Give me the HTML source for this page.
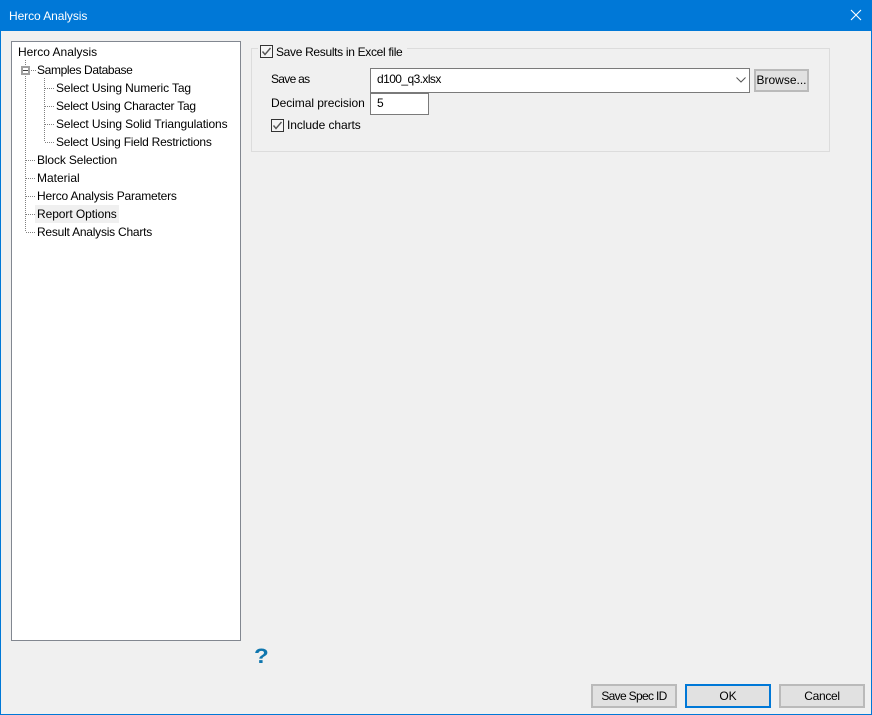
<!DOCTYPE html>
<html><head><meta charset="utf-8"><style>
html,body{margin:0;padding:0;width:872px;height:715px;overflow:hidden}
body{position:relative;background:#f0f0f0;font:12px/16px "Liberation Sans",sans-serif;color:#000}
#win{position:absolute;left:0;top:0;width:870px;height:713px;border:1px solid #0078d7}
.a{position:absolute;white-space:nowrap}
.d{position:absolute;background-image:linear-gradient(#808080 50%,transparent 50%);background-size:1px 2px;width:1px}
.h{position:absolute;background-image:linear-gradient(90deg,#808080 50%,transparent 50%);background-size:2px 1px;height:1px}
.btn{position:absolute;box-sizing:border-box;background:#e1e1e1;border:2px solid #bababa;text-align:center}
.cb{position:absolute;box-sizing:border-box;width:13px;height:13px;border:1px solid #333;background:#f4f4f4}
</style></head><body>
<div id="win"></div>
<div class="a" style="left:0;top:0;width:872px;height:31px;background:#0078d7"></div>
<div class="a" style="left:9px;top:8px;color:#fff;letter-spacing:-.08px">Herco Analysis</div>
<svg class="a" style="left:850px;top:9px" width="12" height="12"><path d="M1 1L11 11M11 1L1 11" stroke="#fff" stroke-width="1.1" fill="none"/></svg>

<div class="a" style="left:11px;top:41px;width:228px;height:598px;border:1px solid #828790;background:#fff"></div>
<div class="d" style="left:25px;top:60px;height:172px"></div>
<div class="d" style="left:44px;top:78px;height:64px"></div>
<div class="h" style="left:31px;top:70px;width:5px"></div>
<div class="h" style="left:45px;top:88px;width:9px"></div>
<div class="h" style="left:45px;top:106px;width:9px"></div>
<div class="h" style="left:45px;top:124px;width:9px"></div>
<div class="h" style="left:45px;top:142px;width:9px"></div>
<div class="h" style="left:26px;top:160px;width:9px"></div>
<div class="h" style="left:26px;top:178px;width:9px"></div>
<div class="h" style="left:26px;top:196px;width:9px"></div>
<div class="h" style="left:26px;top:214px;width:9px"></div>
<div class="h" style="left:26px;top:232px;width:9px"></div>
<div class="a" style="left:21px;top:66px;width:5px;height:5px;border:2px solid #a0a0a0;background:#fff"></div>
<div class="a" style="left:23px;top:70px;width:5px;height:1px;background:#404040"></div>
<div class="a" style="left:35px;top:205px;width:84px;height:18px;background:#f0f0f0"></div>

<div class="a" style="left:18px;top:44px;letter-spacing:-.02px">Herco Analysis</div>
<div class="a" style="left:37px;top:62px;letter-spacing:-.37px">Samples Database</div>
<div class="a" style="left:56px;top:80px;letter-spacing:-.12px">Select Using Numeric Tag</div>
<div class="a" style="left:56px;top:98px;letter-spacing:-.23px">Select Using Character Tag</div>
<div class="a" style="left:56px;top:116px;letter-spacing:-.12px">Select Using Solid Triangulations</div>
<div class="a" style="left:56px;top:134px;letter-spacing:-.23px">Select Using Field Restrictions</div>
<div class="a" style="left:37px;top:152px;letter-spacing:-.13px">Block Selection</div>
<div class="a" style="left:37px;top:170px">Material</div>
<div class="a" style="left:37px;top:188px;letter-spacing:-.2px">Herco Analysis Parameters</div>
<div class="a" style="left:37px;top:206px;letter-spacing:-.07px">Report Options</div>
<div class="a" style="left:37px;top:224px;letter-spacing:-.23px">Result Analysis Charts</div>

<div class="a" style="left:251px;top:48px;width:577px;height:102px;border:1px solid #dcdcdc"></div>
<div class="a" style="left:258px;top:44px;width:149px;height:10px;background:#f0f0f0"></div>
<div class="cb" style="left:260px;top:45px"></div>
<svg class="a" style="left:260px;top:45px" width="13" height="13"><path d="M2.5 6.5L5 9.5L10.5 3" stroke="#555" stroke-width="1.4" fill="none"/></svg>
<div class="a" style="left:276px;top:44px;letter-spacing:-.32px">Save Results in Excel file</div>

<div class="a" style="left:271px;top:71px;letter-spacing:-.7px">Save as</div>
<div class="a" style="left:370px;top:68px;width:378px;height:23px;border:1px solid #7a7a7a;background:#fff"></div>
<div class="a" style="left:377px;top:71px;letter-spacing:-.58px">d100_q3.xlsx</div>
<svg class="a" style="left:736px;top:77px" width="10" height="6"><path d="M0.5 0.5L5 5L9.5 0.5" stroke="#555" stroke-width="1" fill="none"/></svg>
<div class="btn" style="left:754px;top:69px;width:55px;height:23px;line-height:19px">Browse...</div>

<div class="a" style="left:271px;top:95px;letter-spacing:-.06px">Decimal precision</div>
<div class="a" style="left:370px;top:93px;width:57px;height:20px;border:1px solid #7a7a7a;background:#fff"></div>
<div class="a" style="left:377px;top:95px">5</div>

<div class="cb" style="left:271px;top:119px"></div>
<svg class="a" style="left:271px;top:119px" width="13" height="13"><path d="M2.5 6.5L5 9.5L10.5 3" stroke="#555" stroke-width="1.4" fill="none"/></svg>
<div class="a" style="left:287px;top:117px;letter-spacing:-.07px">Include charts</div>

<div class="a" style="left:254px;top:646px;font:bold 21px/22px 'Liberation Sans',sans-serif;color:#0f76ae;transform:scaleX(1.15);transform-origin:left top">?</div>

<div class="btn" style="left:591px;top:684px;width:86px;height:24px;line-height:20px;letter-spacing:-.67px">Save Spec ID</div>
<div class="btn" style="left:685px;top:684px;width:86px;height:24px;line-height:20px;border:2px solid #0078d7">OK</div>
<div class="btn" style="left:779px;top:684px;width:86px;height:24px;line-height:20px;letter-spacing:-.3px">Cancel</div>
</body></html>
